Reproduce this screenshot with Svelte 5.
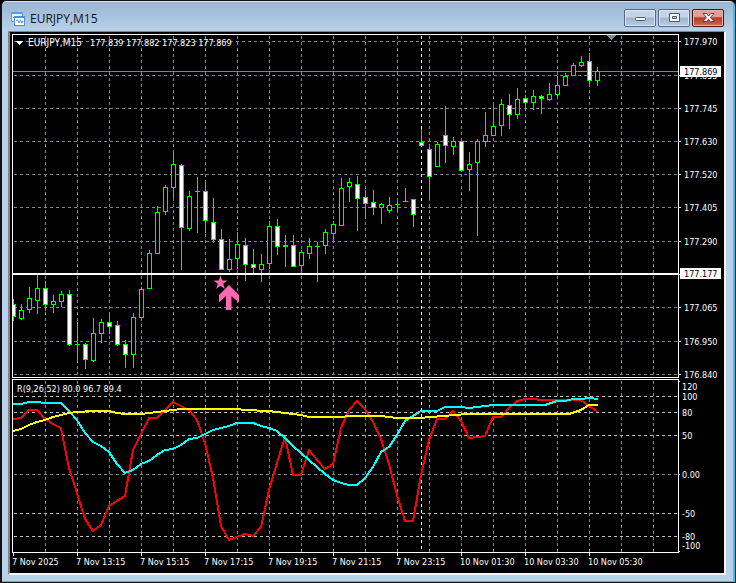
<script>
  // Candles: [wick top, body top, body bottom, wick bottom, falling]; one every 8 units.
  const candles = [
    [299,304,317,321,1],[304,310,319,320,0],[287,298,310,313,0],[275,288,301,314,0],
    [281,288,305,311,1],[295,301,305,313,0],[291,294,302,307,0],[290,294,345,346,1],
    [322,344,345,363,0],[343,344,360,369,1],[318,333,361,362,0],[319,322,334,343,0],
    [313,322,327,334,1],[321,325,345,346,1],[340,344,355,368,1],[313,317,355,368,0],
    [287,289,318,321,0],[250,253,289,289,0],[206,212,254,254,0],[185,187,212,215,0],
    [151,164,188,198,0],[164,165,228,270,1],[191,196,229,231,0],[177,191,192,233,0],
    [180,191,221,233,1],[198,222,240,243,1],[229,239,270,270,1],[239,259,270,272,0],
    [232,244,259,269,0],[238,245,265,281,1],[249,264,268,273,1],[254,264,270,282,0],
    [221,226,264,269,0],[219,226,247,255,1],[235,245,247,267,0],[235,245,267,267,1],
    [250,252,266,273,0],[238,246,254,259,0],[242,246,247,282,0],[229,232,246,254,0],
    [221,224,234,241,0],[178,188,226,226,0],[178,182,187,202,0],[176,184,199,231,1],
    [190,197,204,217,1],[190,202,208,215,1],[203,204,208,224,0],[197,205,211,213,0],
    [201,204,205,211,0],[188,201,202,202,0],[199,199,215,227,1],[129,142,146,146,1],
    [147,149,177,200,1],[142,144,167,167,0],[106,135,146,163,1],[137,141,147,155,0],
    [140,141,171,172,1],[152,164,170,191,0],[139,141,163,236,0],[112,135,142,147,0],
    [105,126,136,136,0],[99,104,126,136,0],[94,105,115,129,1],[88,99,115,119,0],
    [95,98,103,111,1],[90,96,103,110,0],[95,96,99,114,1],[83,94,100,101,0],
    [76,85,95,97,0],[73,76,86,86,0],[63,65,76,76,0],[56,62,66,67,0],
    [53,61,81,84,1],[67,71,81,86,0]
  ].map((c, i) => ({ x: 13 + i * 8, high: c[0], top: c[1], bottom: c[2], low: c[3], falling: c[4] }));

  const red = '13,419 21,418 29,410 37,410 45,419 53,424 61,428 69,468 77,493 85,519 93,531 101,525 109,506 117,501 125,496 133,450 141,434 149,418 157,418 165,410 173,402 181,406 189,410 197,420 205,443 213,478 221,526 229,540 237,537 245,534 253,536 261,527 269,490 277,463 285,437 293,475 301,475 309,450 317,460 325,469 333,464 341,428 349,410 357,401 365,409 373,422 381,439 389,464 397,495 405,521 413,521 421,475 429,440 437,419 445,419 453,411 461,421 469,438 477,437 485,436 493,417 501,417 509,408 517,401 525,399 533,399 541,400 581,400 589,406 597,411';
  const cyan = '13,404 21,404 29,402 37,402 45,403 61,403 69,411 77,420 85,433 93,442 101,446 109,452 117,464 125,473 133,470 141,464 149,461 157,455 165,450 173,449 181,445 189,439 197,438 205,434 213,430 221,428 229,426 237,423 253,423 261,426 269,428 277,431 285,438 293,446 301,453 309,460 317,467 325,474 333,480 341,483 349,485 357,485 365,478 373,467 381,452 389,447 397,435 405,421 413,416 421,411 437,411 445,407 461,407 469,408 485,406 493,405 545,405 557,401 565,401 573,399 581,399 589,398 598,399';
  const yellow = '13,431 21,429 29,425 37,422 45,420 53,417 61,415 69,413 77,412 93,411 109,411 117,413 125,414 141,414 149,413 157,412 165,411 173,410 181,409 237,409 245,410 269,411 277,412 285,413 293,414 301,415 309,417 341,417 349,416 381,416 389,417 397,418 421,418 429,417 445,416 453,415 469,414 485,414 569,414 581,410 589,405 598,405';

  const columns = Array.from({ length: 20 }, (_, i) => 45 + i * 32);
  const prices = [
    ['177.970', 41], ['177.855', 75], ['177.745', 108], ['177.630', 141], ['177.520', 174], ['177.405', 207],
    ['177.290', 241], ['', 274], ['177.065', 307], ['176.950', 341], ['176.840', 374]
  ];
  const levels = [['100', 396], ['80', 412], ['50', 435], ['-50', 513], ['-80', 536]];
  const dates = ['7 Nov 2025', '7 Nov 13:15', '7 Nov 15:15', '7 Nov 17:15', '7 Nov 19:15', '7 Nov 21:15', '7 Nov 23:15', '10 Nov 01:30', '10 Nov 03:30', '10 Nov 05:30'];
</script>

<main class="window">
  <header class="titlebar">
    <svg class="logo" viewBox="0 0 14 14" aria-hidden="true">
      <path d="M0.5 9.500V0.500H11.500V4M0.500 9.500H3" fill="#e8f2fd" stroke="#5d9be8" />
      <path d="M0.500 1.500H11.500M2 6L4 4L5 5" fill="none" stroke="#5d9be8" />
      <rect x="3.5" y="4.500" width="10" height="9" fill="#fff" stroke="#4c8de0" />
      <path d="M3.500 5.500H13.500M5 9L6.500 8L8 11L9.500 8L11 11L12 9" fill="none" stroke="#4c8de0" />
    </svg>
    <h1>EURJPY,M15</h1>
    <div class="controls">
      <button type="button" aria-label="Minimize">
        <svg viewBox="0 0 14 12"><rect x="2.500" y="5.500" width="10" height="3" rx="1" fill="#fff" stroke="#535666" /></svg>
      </button>
      <button type="button" aria-label="Restore">
        <svg viewBox="0 0 14 12">
          <path d="M2.500 1.500H12.500V9.500H2.500ZM5.500 4.500V6.500H9.500V4.500Z" fill="#fff" fill-rule="evenodd" stroke="#535666" />
        </svg>
      </button>
      <button type="button" class="close" aria-label="Close">
        <svg viewBox="0 0 14 12">
          <path d="M2 1.500H5.500L7.500 4L9.500 1.500H13L9.500 5.500L13 9.500H9.500L7.500 7.500L5.500 9.500H2L5.500 5.500Z" fill="#fff" stroke="#5b4450" />
        </svg>
      </button>
    </div>
  </header>

  <section class="client">
    <svg class="chart" viewBox="10 32 714 541" role="img" aria-label="EURJPY M15 candlestick chart">
      <g shape-rendering="crispEdges">
        <g class="grid">
          {#each columns as x}
            <path d="M{x + 0.5} 36V377M{x + 0.5} 381V552" />
          {/each}
          {#each prices as [, y]}
            <path d="M14 {y + 0.5}H678" />
          {/each}
          <path d="M14 474.5H678" />
        </g>
        <g class="levels">
          {#each levels as [, y]}
            <path d="M14 {y + 0.5}H678" />
          {/each}
        </g>
        <path class="session" d="M421.5 36V552" />
        <path d="M13 71.5H678" stroke="#778899" />
        <path d="M606 35H616L611 40Z" fill="#778899" />

        {#each candles as c}
          <rect x={c.x} y={c.high} width="1" height={c.low - c.high} fill="#0f0" />
          <rect x={c.x - 2} y={c.top} width="5" height={c.bottom - c.top} fill="#0f0" />
          {#if c.bottom - c.top > 2}
            <rect x={c.x - 1} y={c.top + 1} width="3" height={c.bottom - c.top - 2} fill={c.falling ? '#fff' : '#000'} />
          {/if}
        {/each}
        <rect x="10" y="296" width="2" height="28" fill="#000" />

        <rect x="13" y="273" width="666" height="2" fill="#fff" />

        <g class="line">
          <polyline points={red} stroke="#f00" />
          <polyline points={cyan} stroke="#0ff" />
          <polyline points={yellow} stroke="#ff0" />
        </g>

        <g class="frame">
          <path d="M12.5 377.500V34.500H678.500V377.500ZM12.500 552.500V379.500H678.500V552.500Z" />
          {#each prices as [, y]}
            <path d="M679 {y + 0.5}H681" />
          {/each}
          <path d="M679 381.500H680M679 474.500H680M679 551.500H680" />
          {#each dates as _, i}
            <path d="M{13.5 + i * 64} 553V556" />
          {/each}
        </g>
        <path d="M16 41H23L19.500 45Z" fill="#fff" />
      </g>

      <g fill="#ff69b4">
        <path d="M220.500 275.500L222.200 280.500H227.500L223.200 283.700L224.800 289L220.500 285.800L216.200 289L217.800 283.700L213.500 280.500H218.800Z" />
        <path d="M229 285L239 295V302.500L231.500 296V310H226V296L219 302.500V295Z" />
      </g>

      <g class="text">
        <text class="symbol" x="28" y="46">EURJPY,M15</text>
        <text x="90" y="46">177.839 177.882 177.823 177.869</text>
        <text x="17" y="392">R(9,26,52) 80.0 96.7 89.4</text>
        {#each prices as [label, y]}
          {#if label}<text x="684" y={y + 4}>{label}</text>{/if}
        {/each}
        <text x="682" y="390">120</text>
        <text x="682" y="478">0.00</text>
        {#each levels as [label, y]}
          <text x="682" y={y + 4}>{label}</text>
        {/each}
        <text x="682" y="549">-100</text>
        {#each dates as label, i}
          <text x={12 + i * 64} y="565">{label}</text>
        {/each}
      </g>
      <g class="text tag">
        <rect x="680" y="66" width="41" height="11" />
        <text x="684" y="75">177.869</text>
        <rect x="680" y="268" width="41" height="11" />
        <text x="684" y="277">177.177</text>
      </g>
    </svg>
  </section>
</main>

<style>
  :global(body) {
    margin: 0;
    background: #000;
  }
  .window {
    box-sizing: border-box;
    min-height: 100vh;
    display: flex;
    flex-direction: column;
    padding: 0 9px 7px 6px;
    border: solid #111;
    border-width: 1px 1px 1px 2px;
    border-radius: 6px 6px 0 0;
    background: linear-gradient(#98b4d2, #b9d1ea 30px);
    box-shadow: inset -2px -1px #35c3e6, inset 0 1px #d5e3f2;
  }
  .titlebar {
    display: flex;
    align-items: center;
    height: 30px;
    padding-left: 3px;
  }
  .logo {
    width: 14px;
    height: 14px;
    margin-top: 6px;
  }
  h1 {
    flex: 1;
    margin: 6px 0 0 5px;
    font: 400 12px/16px "Open Sans", "Noto Sans", sans-serif;
    color: #111;
  }
  .controls {
    display: flex;
    gap: 2px;
    margin-top: 4px;
    margin-right: 2px;
  }
  button {
    box-sizing: border-box;
    display: flex;
    align-items: center;
    justify-content: center;
    width: 32px;
    height: 18px;
    padding: 0;
    border: 1px solid #59687c;
    border-radius: 2px;
    background: linear-gradient(#c5d5e7 0 45%, #9cb5d0 50%, #b8cee5);
    box-shadow: inset 0 0 0 1px #d8e6f4;
  }
  button svg {
    flex: none;
    width: 14px;
    height: 12px;
  }
  .close {
    border-color: #43141a;
    background: linear-gradient(#dfa197 0 40%, #b93822 50%, #cb6b50);
    box-shadow: inset 0 0 0 1px #e8b2a7;
  }
  .client {
    flex: 1;
    border: solid #858585;
    border-width: 1px 2px 2px;
    border-right-color: #f4f4f4;
    border-bottom-color: #f4f4f4;
    background: #000;
  }
  .chart {
    display: block;
    width: 100%;
    height: auto;
  }
  .grid path {
    stroke: #778899;
    stroke-dasharray: 3 3;
  }
  .levels path {
    stroke: #c0c0c0;
    stroke-dasharray: 3 3;
  }
  .session {
    stroke: #fff;
    stroke-dasharray: 3 3;
  }
  .line polyline {
    fill: none;
    stroke-width: 2;
    stroke-linejoin: round;
  }
  .frame path {
    fill: none;
    stroke: #fff;
  }
  .text {
    font: 9px "DejaVu Sans Condensed", "DejaVu Sans", sans-serif;
    fill: #fff;
  }
  .symbol {
    font-size: 10px;
  }
  .tag text {
    fill: #000;
  }
</style>
